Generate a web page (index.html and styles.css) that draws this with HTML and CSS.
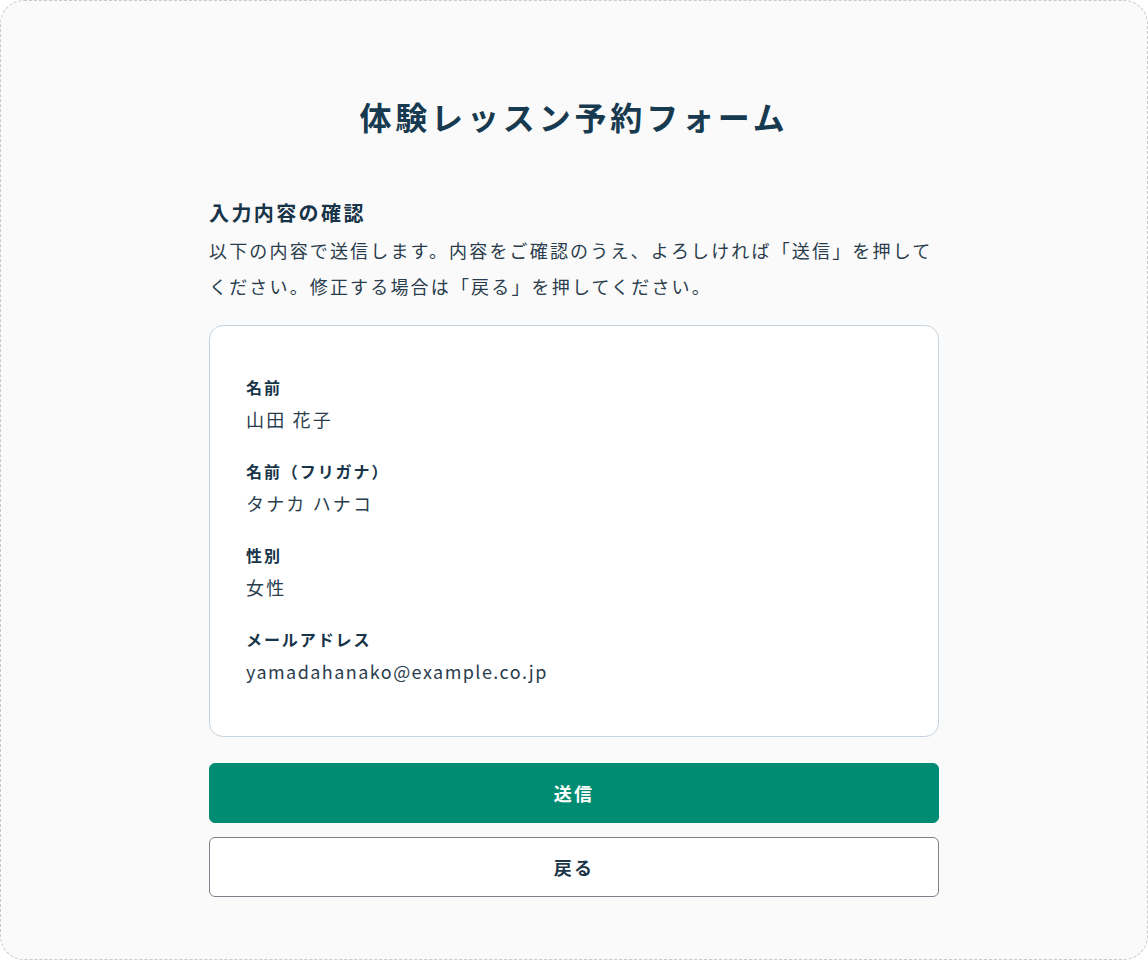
FILE: index.html
```html
<!DOCTYPE html>
<html lang="ja">
<head>
<meta charset="utf-8">
<title>体験レッスン予約フォーム</title>
<link rel="stylesheet" href="styles.css">
</head>
<body>
<div class="frame">
  <main class="form">
    <h1 class="title">体験レッスン予約フォーム</h1>
    <section class="confirm">
      <h2 class="confirm-heading">入力内容の確認</h2>
      <p class="confirm-lead">以下の内容で送信します。内容をご確認のうえ、よろしければ「送信」を押して<br>ください。修正する場合は「戻る」を押してください。</p>
      <dl class="card">
        <div class="item">
          <dt class="label">名前</dt>
          <dd class="value">山田 花子</dd>
        </div>
        <div class="item">
          <dt class="label">名前（フリガナ）</dt>
          <dd class="value">タナカ ハナコ</dd>
        </div>
        <div class="item">
          <dt class="label">性別</dt>
          <dd class="value">女性</dd>
        </div>
        <div class="item">
          <dt class="label">メールアドレス</dt>
          <dd class="value value-latin">yamadahanako@example.co.jp</dd>
        </div>
      </dl>
      <div class="actions">
        <button class="btn btn-primary" type="button">送信</button>
        <button class="btn btn-secondary" type="button">戻る</button>
      </div>
    </section>
  </main>
</div>
</body>
</html>
```

FILE: styles.css
```css
* { box-sizing: border-box; }
html, body { margin: 0; padding: 0; }
body {
  font-family: "Noto Sans CJK JP", "Noto Sans", sans-serif;
  color: #1c3649;
  background: #ffffff;
}
.frame {
  width: 1148px;
  height: 960px;
  border: 1px dashed #c9c9c9;
  border-radius: 24px;
  background: #fafafa;
  overflow: hidden;
}
.form {
  width: 730px;
  margin: 0 auto;
  padding-top: 91px;
}
.title {
  margin: 0;
  font-size: 32px;
  line-height: 48px;
  font-weight: 700;
  letter-spacing: 0.12em;
  text-align: center;
  color: #173a50;
}
.confirm { margin-top: 58px; }
.confirm-heading {
  margin: 0 0 4px;
  font-size: 20px;
  line-height: 30px;
  font-weight: 700;
  letter-spacing: 0.12em;
  color: #173449;
}
.confirm-lead {
  margin: 0;
  font-size: 18px;
  line-height: 36px;
  letter-spacing: 0.12em;
  color: #2a3d4d;
}
.card {
  margin: 21px 0 0;
  padding: 48px 36px 51px;
  background: #ffffff;
  border: 1px solid #c6d3de;
  border-radius: 14px;
  display: flex;
  flex-direction: column;
  gap: 25px;
}
.item { margin: 0; }
.label {
  margin: 0 0 5px;
  font-size: 16px;
  line-height: 26px;
  font-weight: 700;
  letter-spacing: 0.12em;
  color: #173449;
}
.value {
  margin: 0;
  font-size: 18px;
  line-height: 28px;
  letter-spacing: 0.12em;
  color: #2a3d4d;
}
.value-latin { letter-spacing: 0.08em; }
.actions {
  margin-top: 26px;
  display: flex;
  flex-direction: column;
  gap: 14px;
}
.btn {
  display: block;
  width: 100%;
  height: 60px;
  border-radius: 6px;
  font-family: "Noto Sans CJK JP", "Noto Sans", sans-serif;
  font-size: 18px;
  font-weight: 700;
  letter-spacing: 0.12em;
  cursor: pointer;
}
.btn-primary {
  background: #008c72;
  border: 1px solid #008c72;
  color: #ffffff;
}
.btn-secondary {
  background: #ffffff;
  border: 1px solid #7d818b;
  color: #1c3649;
}
```
